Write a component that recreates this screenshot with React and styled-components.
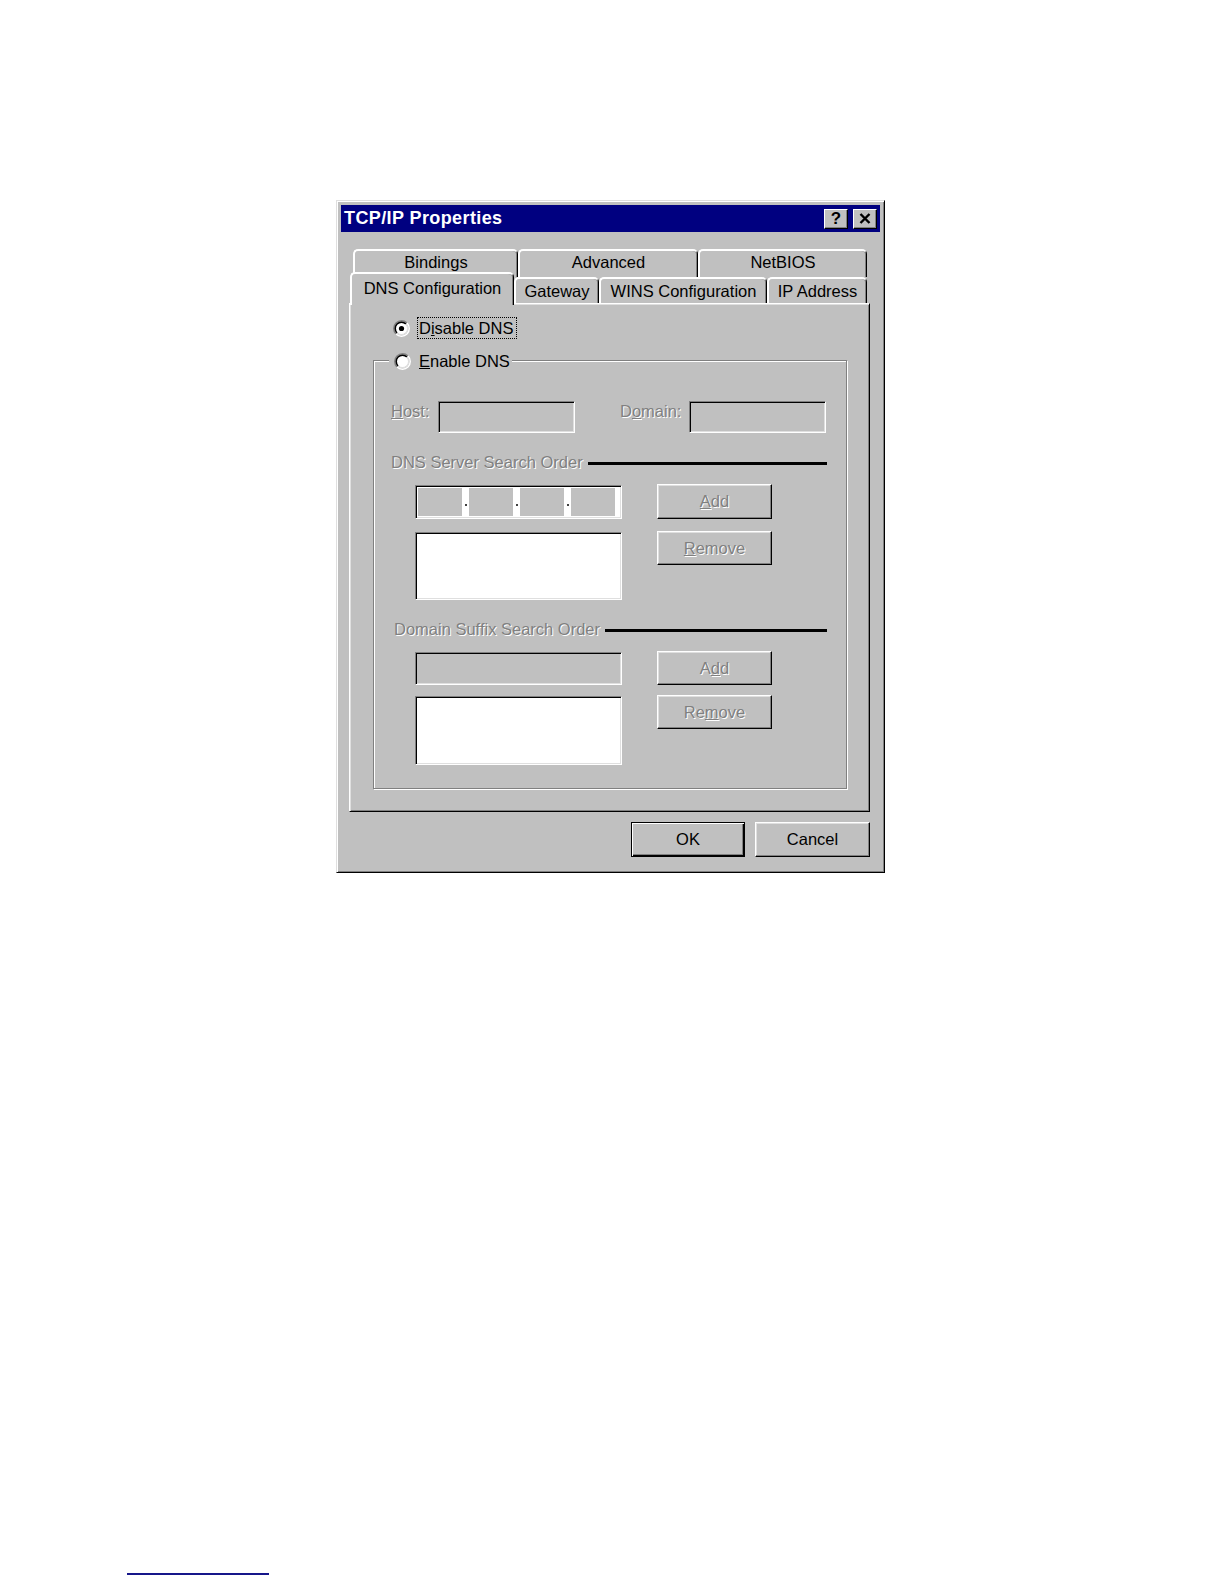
import React from 'react';
import styled, { createGlobalStyle } from 'styled-components';

const GlobalStyle = createGlobalStyle`
  html, body {
    margin: 0;
    padding: 0;
    background: #fff;
  }
  body {
    font-family: "Liberation Sans", Arial, sans-serif;
  }
`

const Page = styled.div`
    width: 1224px;
    min-height: 1584px;
    display: flex;
    flex-direction: column;
    align-items: flex-start;
    padding-top: 200px;
    box-sizing: border-box;
`
const Dialog = styled.div`
    width: 549px;
    height: 673px;
    margin-left: 336px;
    box-sizing: border-box;
    background: #c0c0c0;
    border: 1px solid;
    border-color: #dfdfdf #000 #000 #dfdfdf;
    box-shadow: inset 1px 1px 0 #fff, inset -1px -1px 0 #808080;
    padding: 4px;
    display: flex;
    flex-direction: column;
    font-family: "Liberation Sans", Arial, sans-serif;
    font-size: 16.5px;
    color: #000;
`
const TitleBar = styled.div`
    height: 27px;
    background: #000080;
    display: flex;
    align-items: center;
    padding: 0 3px;
    flex-shrink: 0;
`
const TitleText = styled.span`
    color: #fff;
    font-weight: bold;
    font-size: 18px;
    letter-spacing: 0.4px;
    margin-right: auto;
`
const TitleButton = styled.div`
    width: 24px;
    height: 20px;
    box-sizing: border-box;
    margin-left: ${props => props.$gap}px;
    background: #c0c0c0;
    border: 1px solid;
    border-color: #fff #000 #000 #fff;
    box-shadow: inset -1px -1px 0 #808080;
    display: flex;
    align-items: center;
    justify-content: center;
    font-weight: bold;
    font-size: 17px;
    line-height: 1;
`
const Body = styled.div`
    padding: 17px 10px 0 8px;
    display: flex;
    flex-direction: column;
`
const TabRow = styled.div`
    display: flex;
    align-items: flex-end;
    margin-left: ${props => props.$indent}px;
    ${props => props.$front ? `
        margin-top: -5px;
        margin-bottom: -2px;
        position: relative;
        z-index: 1;
    ` : `
        height: 28px;
    `}
`
const Tab = styled.div`
    box-sizing: border-box;
    flex-shrink: 0;
    width: ${props => props.$w}px;
    height: ${props => props.$h}px;
    margin-bottom: ${props => props.$mb || 0}px;
    padding-bottom: ${props => props.$pb || 0}px;
    background: #c0c0c0;
    border-top: 2px solid #fff;
    border-left: 2px solid #fff;
    border-right: 1px solid #000;
    border-radius: 5px 5px 0 0;
    box-shadow: inset -1px 0 0 #808080;
    display: flex;
    align-items: center;
    justify-content: center;
    white-space: nowrap;
`
const Panel = styled.div`
    width: 521px;
    height: 509px;
    box-sizing: border-box;
    border: 1px solid;
    border-color: #fff #000 #000 #fff;
    box-shadow: inset 1px 1px 0 #dfdfdf, inset -1px -1px 0 #808080;
    padding: 12px 22px 0 23px;
    display: flex;
    flex-direction: column;
`
const RadioRow = styled.div`
    display: flex;
    align-items: center;
    height: 24px;
    margin-left: 20px;
`
const Focus = styled.span`
    margin-left: 7px;
    height: 22px;
    padding: 0 3px 0 1px;
    box-sizing: border-box;
    border: 1px dotted #000;
    display: flex;
    align-items: center;
`
const Group = styled.div`
    margin-top: 20px;
    height: 429px;
    box-sizing: border-box;
    border: 1px solid #808080;
    box-shadow: inset 1px 1px 0 #fff, 1px 1px 0 #fff;
    padding: 0 19px 0 0;
    display: flex;
    flex-direction: column;
`
const Legend = styled.div`
    align-self: flex-start;
    margin: -12px 0 0 15px;
    height: 24px;
    padding: 0 2px 0 5px;
    background: #c0c0c0;
    display: flex;
    align-items: center;
    gap: 8px;
`
const FieldRow = styled.div`
    display: flex;
    align-items: flex-start;
    margin-top: 28px;
    padding-left: 17px;
`
const Label = styled.span`
    width: ${props => props.$w}px;
    margin-left: ${props => props.$ml || 0}px;
    line-height: 20px;
    flex-shrink: 0;
    white-space: nowrap;
    color: #808080;
    text-shadow: 1px 1px 0 #fff;
`
const Sunken = styled.div`
    box-sizing: border-box;
    flex-shrink: 0;
    width: ${props => props.$w}px;
    height: ${props => props.$h}px;
    margin-top: ${props => props.$mt || 0}px;
    background: ${props => props.$white ? '#fff' : '#c0c0c0'};
    border: 1px solid;
    border-color: #808080 #fff #fff #808080;
    box-shadow: inset 1px 1px 0 #000, inset -1px -1px 0 #dfdfdf;
`
const IpBox = styled(Sunken)`
    display: flex;
    padding: 2px 6px 2px 2px;
`
const IpPart = styled.div`
    flex: 1;
    background: #c0c0c0;
`
const IpDot = styled.div`
    width: 7px;
    display: flex;
    justify-content: center;
    align-items: center;
    &::after {
        content: '';
        width: 2px;
        height: 2px;
        margin-top: 6px;
        background: #404040;
    }
`
const Header = styled.div`
    display: flex;
    align-items: center;
    height: 20px;
    margin-top: ${props => props.$mt}px;
    padding-left: ${props => props.$pl}px;
`
const Rule = styled.div`
    flex: 1;
    height: 3px;
    margin: 3px 0 0 5px;
    background: #000;
`
const Section = styled.div`
    display: flex;
    gap: 35px;
    margin-top: 12px;
    padding-left: 41px;
`
const Column = styled.div`
    display: flex;
    flex-direction: column;
    gap: ${props => props.$gap}px;
`
const Button = styled.div`
    box-sizing: border-box;
    width: ${props => props.$w}px;
    height: ${props => props.$h}px;
    background: #c0c0c0;
    border: 1px solid;
    border-color: ${props => props.$default ? '#000' : '#fff #000 #000 #fff'};
    box-shadow: ${props => props.$default
        ? 'inset 1px 1px 0 #fff, inset -1px -1px 0 #000, inset -2px -2px 0 #808080'
        : 'inset -1px -1px 0 #808080, inset 1px 1px 0 #dfdfdf'};
    display: flex;
    align-items: center;
    justify-content: center;
    color: ${props => props.$disabled ? '#808080' : '#000'};
    text-shadow: ${props => props.$disabled ? '1px 1px 0 #fff' : 'none'};
`
const Footer = styled.div`
    display: flex;
    justify-content: flex-end;
    gap: 10px;
    margin-top: 10px;
    width: 521px;
`
const PageRule = styled.div`
    width: 142px;
    height: 2px;
    margin: 700px 0 0 127px;
    background: #16168a;
`

const Radio = ({ checked }) => (
    <svg width="17" height="17" viewBox="0 0 17 17">
        <circle cx="8.5" cy="8.5" r="6" fill="#fff" />
        <path d="M3.02 13.98 A7.75 7.75 0 0 1 13.98 3.02" fill="none" stroke="#808080" strokeWidth="1.5" />
        <path d="M13.98 3.02 A7.75 7.75 0 0 1 3.02 13.98" fill="none" stroke="#fff" strokeWidth="1.5" />
        <path d="M4.08 12.92 A6.25 6.25 0 0 1 12.92 4.08" fill="none" stroke="#000" strokeWidth="1.5" />
        <path d="M12.92 4.08 A6.25 6.25 0 0 1 4.08 12.92" fill="none" stroke="#dfdfdf" strokeWidth="1.5" />
        {checked && <circle cx="8.5" cy="8.5" r="2.6" fill="#000" />}
    </svg>
)

const CloseGlyph = () => (
    <svg width="12" height="11" viewBox="0 0 12 11">
        <path d="M1.5 1 L10.5 10 M10.5 1 L1.5 10" stroke="#000" strokeWidth="2.4" />
    </svg>
)

const backTabs = [
    { label: 'Bindings', w: 165 },
    { label: 'Advanced', w: 180 },
    { label: 'NetBIOS', w: 169 },
]
const frontTabs = [
    { label: 'Gateway', w: 85 },
    { label: 'WINS Configuration', w: 168 },
    { label: 'IP Address', w: 100 },
]

const App = () => {
    return (
        <Page>
            <GlobalStyle />
            <Dialog>
                <TitleBar>
                    <TitleText>TCP/IP Properties</TitleText>
                    <TitleButton $gap={0}>?</TitleButton>
                    <TitleButton $gap={5}><CloseGlyph /></TitleButton>
                </TitleBar>
                <Body>
                    <TabRow $indent={4}>
                        {backTabs.map(t => (
                            <Tab key={t.label} $w={t.w} $h={28} $pb={3}>{t.label}</Tab>
                        ))}
                    </TabRow>
                    <TabRow $front $indent={1}>
                        <Tab $w={164} $h={33} $pb={2}>DNS Configuration</Tab>
                        {frontTabs.map(t => (
                            <Tab key={t.label} $w={t.w} $h={26} $mb={2}>{t.label}</Tab>
                        ))}
                    </TabRow>
                    <Panel>
                        <RadioRow>
                            <Radio checked />
                            <Focus>D<u>i</u>sable DNS</Focus>
                        </RadioRow>
                        <Group>
                            <Legend>
                                <Radio />
                                <span><u>E</u>nable DNS</span>
                            </Legend>
                            <FieldRow>
                                <Label $w={47}><u>H</u>ost:</Label>
                                <Sunken $w={137} $h={32} />
                                <Label $w={69} $ml={45}>D<u>o</u>main:</Label>
                                <Sunken $w={137} $h={32} />
                            </FieldRow>
                            <Header $mt={19} $pl={17}>
                                <Label>DNS Server Search Order</Label>
                                <Rule />
                            </Header>
                            <Section>
                                <Column $gap={13}>
                                    <IpBox $w={207} $h={34} $mt={1} $white>
                                        <IpPart /><IpDot /><IpPart /><IpDot /><IpPart /><IpDot /><IpPart />
                                    </IpBox>
                                    <Sunken $w={207} $h={68} $white />
                                </Column>
                                <Column $gap={12}>
                                    <Button $w={115} $h={35} $disabled><u>A</u>dd</Button>
                                    <Button $w={115} $h={34} $disabled><u>R</u>emove</Button>
                                </Column>
                            </Section>
                            <Header $mt={19} $pl={20}>
                                <Label>Domain Suffix Search Order</Label>
                                <Rule />
                            </Header>
                            <Section>
                                <Column $gap={11}>
                                    <Sunken $w={207} $h={33} $mt={1} />
                                    <Sunken $w={207} $h={69} $white />
                                </Column>
                                <Column $gap={10}>
                                    <Button $w={115} $h={34} $disabled>A<u>d</u>d</Button>
                                    <Button $w={115} $h={34} $disabled>Re<u>m</u>ove</Button>
                                </Column>
                            </Section>
                        </Group>
                    </Panel>
                    <Footer>
                        <Button $w={114} $h={35} $default>OK</Button>
                        <Button $w={115} $h={35}>Cancel</Button>
                    </Footer>
                </Body>
            </Dialog>
            <PageRule />
        </Page>
    );
}

export default App;
